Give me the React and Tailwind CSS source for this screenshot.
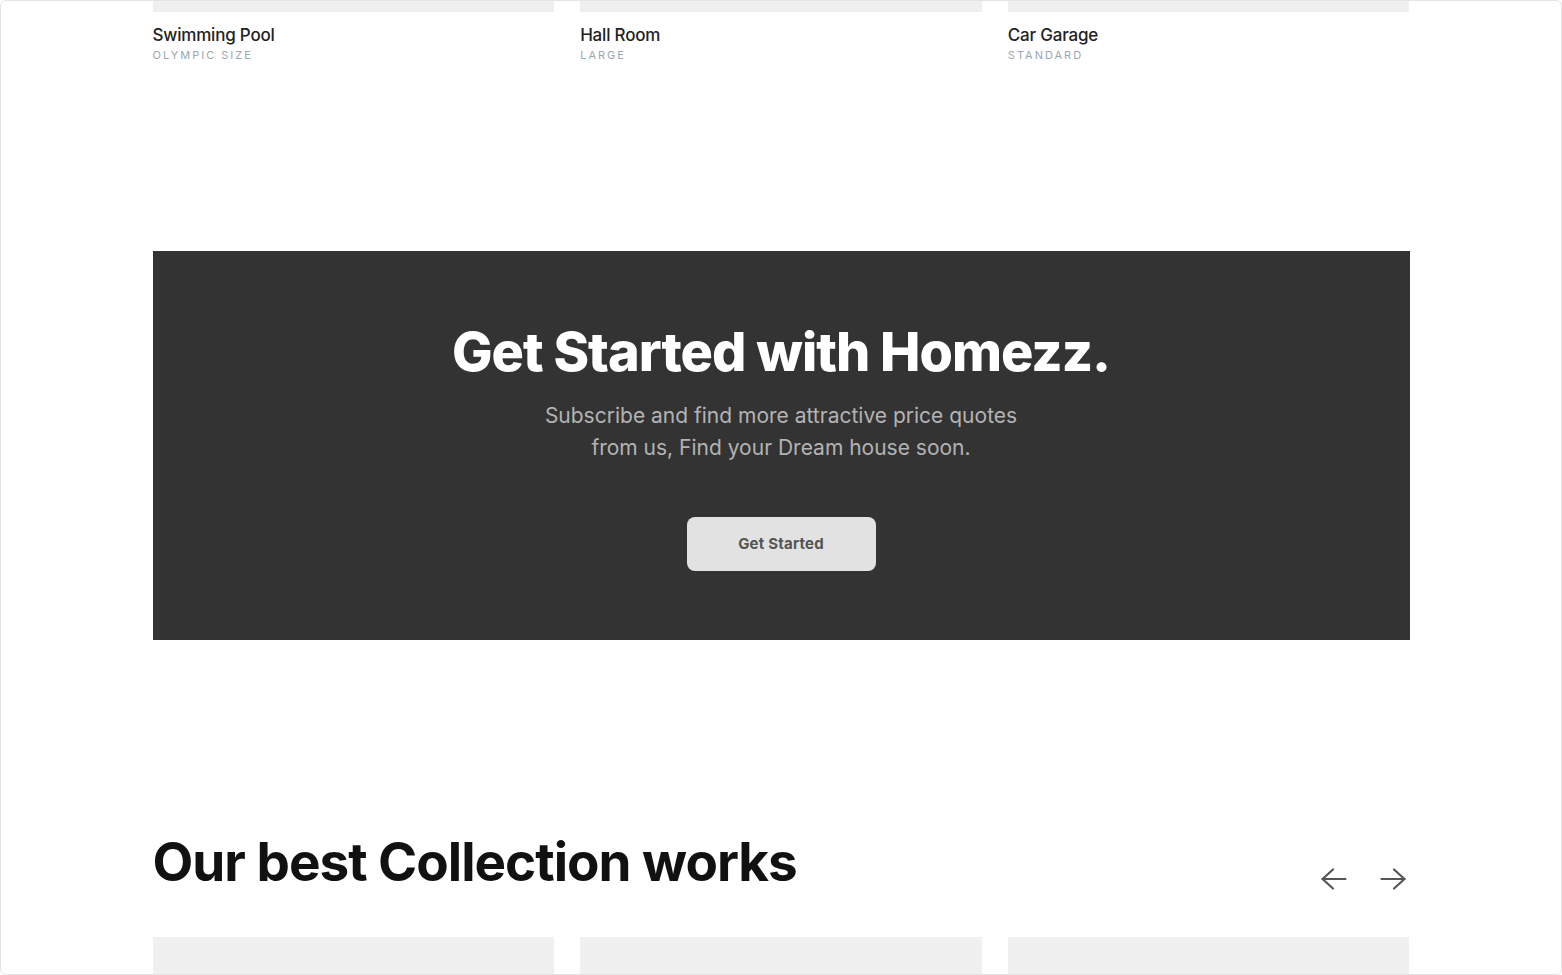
import React from "react";

const topItems = [
  { name: "Swimming Pool", tag: "Olympic Size" },
  { name: "Hall Room", tag: "Large" },
  { name: "Car Garage", tag: "Standard" },
];

const Arrow = ({ flip }) => (
  <svg
    width="26"
    height="22"
    viewBox="0 0 26 22"
    fill="none"
    stroke="#555555"
    strokeWidth="2.2"
    strokeLinecap="round"
    strokeLinejoin="round"
    className={flip ? "rotate-180" : ""}
  >
    <path d="M1.5 11H24.5" />
    <path d="M12 1.5L1.5 11L12 20.5" />
  </svg>
);

const App = () => {
  return (
    <div className="h-[975px] w-full overflow-hidden bg-white border border-[#e4e4e4] rounded-[6px] font-['Inter',sans-serif]">
      <div className="w-[1257px] mx-auto">
        {/* cards from the section above */}
        <div className="grid grid-cols-3 gap-[26px]">
          {topItems.map((item) => (
            <div key={item.name} className="flex flex-col">
              <div className="h-[11px] bg-[#efefef]" />
              <p className="mt-[11px] text-[17px] leading-[24px] font-medium text-[#222] tracking-[-0.2px]">
                {item.name}
              </p>
              <p className="text-[11px] leading-[16px] uppercase tracking-[2px] text-[#9ba6b2]">
                {item.tag}
              </p>
            </div>
          ))}
        </div>

        {/* get started banner */}
        <div className="mt-[188px] h-[389px] bg-[#333333] flex flex-col items-center pt-[68px]">
          <h2 className="text-[54px] leading-[65px] font-extrabold text-white tracking-[-1px]">
            Get Started with Homezz.
          </h2>
          <p className="mt-[16px] text-[21px] leading-[32px] text-[#b3b3b3] text-center">
            Subscribe and find more attractive price quotes
            <br />
            from us, Find your Dream house soon.
          </p>
          <button className="mt-[53px] w-[189px] h-[54px] rounded-[8px] bg-[#e2e2e2] text-[15px] font-bold text-[#555] tracking-[0.2px]">
            Get Started
          </button>
        </div>

        {/* collection heading */}
        <div className="mt-[190px] flex justify-between items-start">
          <h2 className="text-[53px] leading-[65px] font-bold text-[#111] tracking-[-1px]">
            Our best Collection works
          </h2>
          <div className="flex gap-[33px] mt-[38px] mr-[4px]">
            <Arrow />
            <Arrow flip />
          </div>
        </div>

        <div className="mt-[42px] grid grid-cols-3 gap-[26px]">
          <div className="h-[60px] bg-[#f0f0f0]" />
          <div className="h-[60px] bg-[#f0f0f0]" />
          <div className="h-[60px] bg-[#f0f0f0]" />
        </div>
      </div>
    </div>
  );
};

export default App;
